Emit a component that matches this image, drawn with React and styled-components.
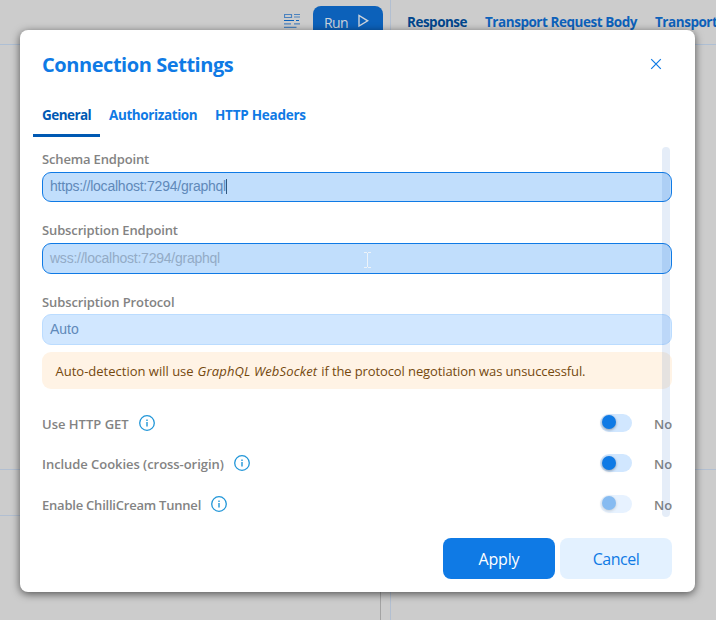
import React from "react";
import styled, { createGlobalStyle } from "styled-components";

const Global = createGlobalStyle`
  * { box-sizing: border-box; }
  body { margin: 0; overflow: hidden; background: #ccc; font-family: "Open Sans", "Noto Sans", sans-serif; }
  button, input { font-family: inherit; }
`;

const Screen = styled.div`
  position: relative;
  width: 716px;
  height: 620px;
  overflow: hidden;
  background: #cccccc;
`;

const Workspace = styled.div`
  display: grid;
  grid-template-columns: 390px 1fr;
  height: 100%;
`;

const Pane = styled.section`
  display: flex;
  flex-direction: column;
  overflow: hidden;
  border-left: ${(p) => (p.$divided ? "1px solid #b2bfd1" : "none")};
`;

const PaneHeader = styled.header`
  display: flex;
  align-items: flex-start;
  flex: none;
  height: 45px;
  padding: ${(p) => p.$padding};
  border-bottom: 1px solid #aebfd4;
`;

const PaneBody = styled.div`
  flex: 1;
  display: grid;
  grid-template-rows: ${(p) => p.$rows};
  width: ${(p) => p.$width || "auto"};
  border-right: ${(p) => (p.$width ? "1px solid #a3a3a3" : "none")};
`;

const PaneSection = styled.div`
  border-bottom: 1px solid #b2bfd1;
`;

const FormatIcon = styled.svg`
  flex: none;
  margin: 8px 13px 0 0;
`;

const RunButton = styled.button`
  display: flex;
  align-items: center;
  gap: 9px;
  width: 70px;
  height: 32px;
  padding: 0 0 0 11px;
  border: 0;
  border-radius: 8px;
  background: #0c61ba;
  color: #cdd3da;
  font-size: 14px;
  letter-spacing: -0.6px;
`;

const PlayIcon = styled.svg`
  margin: -2px 0 0 1px;
`;

const PaneTab = styled.span`
  flex: none;
  width: ${(p) => p.$w}px;
  font-size: 13.5px;
  line-height: 20px;
  font-weight: 700;
  white-space: nowrap;
  letter-spacing: ${(p) => p.$track}px;
  color: ${(p) => (p.$active ? "#00468c" : "#0c61ba")};
`;

const Dialog = styled.div`
  position: absolute;
  left: 20px;
  top: 30px;
  width: 675px;
  height: 562px;
  display: flex;
  flex-direction: column;
  border-radius: 8px;
  background: #fff;
  box-shadow: 0 2px 8px rgba(0, 0, 0, 0.6);
`;

const DialogHeader = styled.header`
  display: flex;
  justify-content: space-between;
  align-items: center;
  height: 70px;
  padding: 0 33px 0 22px;
`;

const Title = styled.h1`
  margin: 0;
  font-size: 20px;
  line-height: 28px;
  font-weight: 700;
  letter-spacing: -0.44px;
  color: #0f7ae5;
`;

const CloseIcon = styled.svg`
  margin-top: -3px;
`;

const Tabs = styled.nav`
  display: flex;
  height: 37px;
  padding-left: 13px;
`;

const Tab = styled.span`
  width: ${(p) => p.$w}px;
  height: 37px;
  padding-left: 9px;
  font-size: 13.5px;
  line-height: 30px;
  font-weight: 700;
  white-space: nowrap;
  letter-spacing: ${(p) => p.$track}px;
  color: ${(p) => (p.$active ? "#0059b3" : "#0f7ae5")};
  border-bottom: ${(p) => (p.$active ? "3px solid #0059b3" : "none")};
`;

const Form = styled.div`
  position: relative;
  height: 380px;
  margin-top: 10px;
  padding: 0 23px 0 22px;
`;

const Field = styled.label`
  display: flex;
  flex-direction: column;
  height: ${(p) => p.$h}px;
`;

const Label = styled.span`
  height: 25px;
  font-size: 13px;
  line-height: ${(p) => p.$lh || 24}px;
  font-weight: 600;
  white-space: nowrap;
  letter-spacing: ${(p) => p.$track || 0}px;
  color: #838383;
`;

const Box = styled.div`
  display: flex;
  align-items: center;
  height: ${(p) => p.$h || 31}px;
  padding: 0 7px ${(p) => p.$lift || 1}px;
  border: 1px solid ${(p) => (p.$soft ? "#bbdcff" : "#0f7ae5")};
  border-radius: 9px;
  background: ${(p) => (p.$soft ? "#d1e7ff" : "#c1defc")};
  color: ${(p) => (p.$muted ? "#93abc6" : "#5f89b9")};
  font-family: "Liberation Sans", Arial, sans-serif;
  font-size: 14px;
  letter-spacing: ${(p) => p.$track || 0}px;
`;

const Caret = styled.i`
  width: 1px;
  height: 15px;
  background: #30577f;
`;

const Notice = styled.p`
  display: flex;
  align-items: center;
  gap: 4px;
  height: 37px;
  margin: 0 0 14px;
  padding: 1px 13px 0 13.5px;
  border-radius: 9px;
  background: #fff3e5;
  color: #75490e;
  font-size: 13px;
  white-space: nowrap;
`;

const NoticeText = styled.span`
  font-style: ${(p) => (p.$italic ? "italic" : "normal")};
  letter-spacing: ${(p) => p.$track}px;
`;

const Option = styled.div`
  display: grid;
  grid-template-columns: 1fr 54px 18px;
  align-items: center;
  height: ${(p) => p.$h || 40}px;
`;

const OptionName = styled.div`
  display: flex;
  align-items: center;
  gap: 10px;
`;

const InfoIcon = styled.svg`
  margin-top: -1px;
`;

const Switch = styled.span`
  display: flex;
  align-items: center;
  width: 32px;
  height: 18px;
  margin-top: -1px;
  padding: 0 2px 1px;
  border-radius: 9px;
  background: #d1e7ff;
  opacity: ${(p) => (p.$disabled ? 0.5 : 1)};
`;

const Knob = styled.i`
  width: 14px;
  height: 14px;
  border-radius: 50%;
  background: #0f7ae5;
  box-shadow: 0 1px 3px rgba(0, 0, 0, 0.35);
`;

const Scrollbar = styled.i`
  position: absolute;
  top: 0;
  right: 25px;
  width: 8px;
  height: 370px;
  border-radius: 4px;
  background: rgba(15, 95, 190, 0.11);
`;

const Pointer = styled.svg`
  position: absolute;
  left: 344px;
  top: 105px;
`;

const Actions = styled.footer`
  display: flex;
  justify-content: flex-end;
  gap: 5px;
  margin-top: 11px;
  padding-right: 23px;
`;

const Button = styled.button`
  width: 112px;
  height: 41px;
  padding: 1px 0 0;
  border: 0;
  border-radius: 8px;
  font-size: 16px;
  font-weight: ${(p) => (p.$primary ? 500 : 400)};
  letter-spacing: ${(p) => p.$track || 0}px;
  background: ${(p) => (p.$primary ? "#0f7ae5" : "#e3f1ff")};
  color: ${(p) => (p.$primary ? "#fff" : "#0f7ae5")};
`;

const options = [
  { name: "Use HTTP GET", track: 0 },
  { name: "Include Cookies (cross-origin)", track: -0.05, h: 41 },
  { name: "Enable ChilliCream Tunnel", track: -0.22, disabled: true },
];

function Info() {
  return (
    <InfoIcon width="16" height="16" viewBox="0 0 16 16" fill="none" stroke="#2196d8">
      <circle cx="8" cy="8" r="7.3" strokeWidth="1.3" />
      <path d="M8 4.6v1.3M8 7v4.4" strokeWidth="1.4" />
    </InfoIcon>
  );
}

export default function App() {
  return (
    <Screen>
      <Global />
      <Workspace>
        <Pane>
          <PaneHeader $padding="6px 7px 0 284px">
            <FormatIcon width="16" height="14" viewBox="0 0 16 14">
              <path d="M.5.5h7v3h-7zM10 .5h6M10 3h6M0 9.8h7M10 9.8h6M0 13.3h12.5" fill="none" stroke="#4c83bf" strokeWidth="1.2" />
              <path d="M0 6.5h10M12 6.5h3" stroke="#0c61ba" />
            </FormatIcon>
            <RunButton>
              Run
              <PlayIcon width="11" height="14" viewBox="0 0 11 14" fill="none" stroke="#cdd3da" strokeWidth="1.4">
                <path d="M1 1.5v10.5l8.7-5.2z" />
              </PlayIcon>
            </RunButton>
          </PaneHeader>
          <PaneBody $rows="425px 46px 1fr" $width="381px">
            <PaneSection />
            <PaneSection />
          </PaneBody>
        </Pane>
        <Pane $divided>
          <PaneHeader $padding="12px 0 0 16px">
            <PaneTab $active $w={78} $track={-0.5}>Response</PaneTab>
            <PaneTab $w={170} $track={-0.46}>Transport Request Body</PaneTab>
            <PaneTab $w={61} $track={-0.46}>Transport</PaneTab>
          </PaneHeader>
          <PaneBody $rows="425px 1fr">
            <PaneSection />
          </PaneBody>
        </Pane>
      </Workspace>

      <Dialog>
        <DialogHeader>
          <Title>Connection Settings</Title>
          <CloseIcon width="12" height="12" viewBox="0 0 12 12" stroke="#0f7ae5" strokeWidth="1.2">
            <path d="M1.2 1.2l9.6 9.6M10.8 1.2l-9.6 9.6" />
          </CloseIcon>
        </DialogHeader>
        <Tabs>
          <Tab $active $w={67} $track={-0.55}>General</Tab>
          <Tab $w={106} $track={-0.4}>Authorization</Tab>
          <Tab $w={110} $track={-0.25}>HTTP Headers</Tab>
        </Tabs>
        <Form>
          <Field $h={71}>
            <Label $track={-0.15}>Schema Endpoint</Label>
            <Box $h={30} $lift={2} $track={-0.23}>https://localhost:7294/graphql<Caret /></Box>
          </Field>
          <Field $h={71}>
            <Label $track={-0.13}>Subscription Endpoint</Label>
            <Box $muted $track={-0.24}>wss://localhost:7294/graphql</Box>
          </Field>
          <Field $h={63}>
            <Label $lh={26} $track={-0.1}>Subscription Protocol</Label>
            <Box $soft>Auto</Box>
          </Field>
          <Notice>
            <NoticeText $track={0}>Auto-detection will use</NoticeText>
            <NoticeText as="em" $italic $track={0.14}>GraphQL WebSocket</NoticeText>
            <NoticeText $track={-0.11}>if the protocol negotiation was unsuccessful.</NoticeText>
          </Notice>
          {options.map((o) => (
            <Option key={o.name} $h={o.h}>
              <OptionName>
                <Label $lh={26} $track={o.track}>{o.name}</Label>
                <Info />
              </OptionName>
              <Switch $disabled={o.disabled}><Knob /></Switch>
              <Label $lh={26}>No</Label>
            </Option>
          ))}
          <Scrollbar />
          <Pointer width="7" height="16" viewBox="0 0 7 16" fill="none" stroke="#edf3f9">
            <path d="M0 .5h3M4 .5h3M3.5 1v14M0 15.5h3M4 15.5h3" />
          </Pointer>
        </Form>
        <Actions>
          <Button $primary $track={-0.2}>Apply</Button>
          <Button $track={-0.5}>Cancel</Button>
        </Actions>
      </Dialog>
    </Screen>
  );
}
